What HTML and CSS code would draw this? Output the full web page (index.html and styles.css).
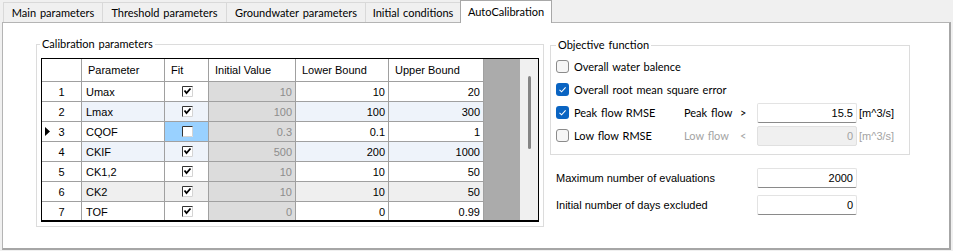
FILE: index.html
```html
<!DOCTYPE html>
<html>
<head>
<meta charset="utf-8">
<link rel="stylesheet" href="styles.css">
</head>
<body>
<div class="tabs">
  <div class="tab t1">Main parameters</div>
  <div class="tab t2">Threshold parameters</div>
  <div class="tab t3">Groundwater parameters</div>
  <div class="tab t4">Initial conditions</div>
  <div class="tab active t5">AutoCalibration</div>
</div>
<div class="panel">
  <fieldset class="group calib">
    <legend>Calibration parameters</legend>
    <div class="grid">
      <div class="table">
        <div class="c hd"></div>
        <div class="c hd">Parameter</div>
        <div class="c hd">Fit</div>
        <div class="c hd">Initial Value</div>
        <div class="c hd">Lower Bound</div>
        <div class="c hd">Upper Bound</div>

        <div class="c rh">1</div>
        <div class="c txt">Umax</div>
        <div class="c fit"><svg class="cb" width="11" height="11" viewBox="0 0 11 11"><rect x="0" y="0" width="11" height="11" fill="#fff"/><path d="M0.5 11V0.5H11" stroke="#333" fill="none"/><path d="M10.5 0.5V10.5H0.5" stroke="#d4d4d4" fill="none"/><path d="M2.5 4.5L4.5 7L8.5 2.5" stroke="#000" stroke-width="1.8" fill="none"/></svg></div>
        <div class="c num ro">10</div>
        <div class="c num">10</div>
        <div class="c num">20</div>

        <div class="c rh">2</div>
        <div class="c txt alt">Lmax</div>
        <div class="c fit alt"><svg class="cb" width="11" height="11" viewBox="0 0 11 11"><rect x="0" y="0" width="11" height="11" fill="#fff"/><path d="M0.5 11V0.5H11" stroke="#333" fill="none"/><path d="M10.5 0.5V10.5H0.5" stroke="#d4d4d4" fill="none"/><path d="M2.5 4.5L4.5 7L8.5 2.5" stroke="#000" stroke-width="1.8" fill="none"/></svg></div>
        <div class="c num ro">100</div>
        <div class="c num alt">100</div>
        <div class="c num alt">300</div>

        <div class="c rh cur"><svg class="ind" width="5" height="9" viewBox="0 0 5 9"><path d="M0 0L5 4.5L0 9Z" fill="#000"/></svg>3</div>
        <div class="c txt">CQOF</div>
        <div class="c fit sel"><svg class="cb" width="11" height="11" viewBox="0 0 11 11"><rect x="0" y="0" width="11" height="11" fill="#fff"/><path d="M0.5 11V0.5H11" stroke="#333" fill="none"/><path d="M10.5 0.5V10.5H0.5" stroke="#d4d4d4" fill="none"/></svg></div>
        <div class="c num ro">0.3</div>
        <div class="c num">0.1</div>
        <div class="c num">1</div>

        <div class="c rh">4</div>
        <div class="c txt alt">CKIF</div>
        <div class="c fit alt"><svg class="cb" width="11" height="11" viewBox="0 0 11 11"><rect x="0" y="0" width="11" height="11" fill="#fff"/><path d="M0.5 11V0.5H11" stroke="#333" fill="none"/><path d="M10.5 0.5V10.5H0.5" stroke="#d4d4d4" fill="none"/><path d="M2.5 4.5L4.5 7L8.5 2.5" stroke="#000" stroke-width="1.8" fill="none"/></svg></div>
        <div class="c num ro">500</div>
        <div class="c num alt">200</div>
        <div class="c num alt">1000</div>

        <div class="c rh">5</div>
        <div class="c txt">CK1,2</div>
        <div class="c fit"><svg class="cb" width="11" height="11" viewBox="0 0 11 11"><rect x="0" y="0" width="11" height="11" fill="#fff"/><path d="M0.5 11V0.5H11" stroke="#333" fill="none"/><path d="M10.5 0.5V10.5H0.5" stroke="#d4d4d4" fill="none"/><path d="M2.5 4.5L4.5 7L8.5 2.5" stroke="#000" stroke-width="1.8" fill="none"/></svg></div>
        <div class="c num ro">10</div>
        <div class="c num">10</div>
        <div class="c num">50</div>

        <div class="c rh">6</div>
        <div class="c txt gr">CK2</div>
        <div class="c fit gr"><svg class="cb" width="11" height="11" viewBox="0 0 11 11"><rect x="0" y="0" width="11" height="11" fill="#fff"/><path d="M0.5 11V0.5H11" stroke="#333" fill="none"/><path d="M10.5 0.5V10.5H0.5" stroke="#d4d4d4" fill="none"/><path d="M2.5 4.5L4.5 7L8.5 2.5" stroke="#000" stroke-width="1.8" fill="none"/></svg></div>
        <div class="c num ro">10</div>
        <div class="c num gr">10</div>
        <div class="c num gr">50</div>

        <div class="c rh">7</div>
        <div class="c txt">TOF</div>
        <div class="c fit"><svg class="cb" width="11" height="11" viewBox="0 0 11 11"><rect x="0" y="0" width="11" height="11" fill="#fff"/><path d="M0.5 11V0.5H11" stroke="#333" fill="none"/><path d="M10.5 0.5V10.5H0.5" stroke="#d4d4d4" fill="none"/><path d="M2.5 4.5L4.5 7L8.5 2.5" stroke="#000" stroke-width="1.8" fill="none"/></svg></div>
        <div class="c num ro">0</div>
        <div class="c num">0</div>
        <div class="c num">0.99</div>
      </div>
      <div class="filler"></div>
      <div class="vscroll"><div class="thumb"></div></div>
    </div>
  </fieldset>

  <div class="right">
    <fieldset class="group objective">
      <legend>Objective function</legend>
      <div class="obj-grid">
        <label class="chk span"><span class="box"></span>Overall water balence</label>
        <label class="chk span"><span class="box on"><svg width="13" height="13" viewBox="0 0 13 13"><path d="M3.5 6.8L5.6 8.8L9.6 4.4" stroke="#fff" stroke-width="1.1" fill="none"/></svg></span>Overall root mean square error</label>

        <label class="chk"><span class="box on"><svg width="13" height="13" viewBox="0 0 13 13"><path d="M3.5 6.8L5.6 8.8L9.6 4.4" stroke="#fff" stroke-width="1.1" fill="none"/></svg></span>Peak flow RMSE</label>
        <span class="ui">Peak flow</span>
        <span class="ui">&gt;</span>
        <div class="field">15.5</div>
        <span class="unit">[m^3/s]</span>

        <label class="chk"><span class="box"></span>Low flow RMSE</label>
        <span class="ui dis">Low flow</span>
        <span class="ui dis">&lt;</span>
        <div class="field disabled">0</div>
        <span class="unit dis">[m^3/s]</span>
      </div>
    </fieldset>
    <div class="settings">
      <span>Maximum number of evaluations</span>
      <div class="field">2000</div>
      <span>Initial number of days excluded</span>
      <div class="field">0</div>
    </div>
  </div>
</div>
</body>
</html>
```
FILE: styles.css
```css
html, body {
  margin: 0;
  padding: 0;
}
body {
  background: #f0f0f0;
  width: 953px;
  height: 251px;
  overflow: hidden;
  font-family: "Liberation Sans", Arial, sans-serif;
  font-size: 11px;
  color: #000;
}

/* tabs */
.tabs {
  display: flex;
  align-items: flex-start;
  height: 22px;
  padding-left: 3px;
}
.tab {
  box-sizing: border-box;
  height: 20px;
  margin-top: 2px;
  margin-right: -1px;
  border: 1px solid #d9d9d9;
  border-bottom: none;
  background: #f0f0f0;
  text-align: center;
  line-height: 19px;
  font-family: Lato, "Noto Sans", sans-serif;
  font-size: 11px;
  word-spacing: 1px;
  white-space: nowrap;
}
.t1 { width: 100px; }
.t2 { width: 125px; }
.t3 { width: 140px; }
.t4 { width: 96px; }
.t5 { width: 92px; }
.tab.active {
  position: relative;
  z-index: 1;
  height: 23px;
  margin-top: 0;
  background: #fff;
  border-color: #a8a8a8;
  line-height: 21px;
}

/* panel */
.panel {
  box-sizing: border-box;
  margin-left: 2px;
  width: 949px;
  height: 228px;
  background: #fff;
  border: 1px solid #b4b4b4;
  border-right: 2px solid #a6a6a6;
  border-bottom: 2px solid #a6a6a6;
  display: flex;
  align-items: flex-start;
}

.group {
  margin: 0;
  padding: 0;
  border: 1px solid #dcdcdc;
  min-width: 0;
  box-sizing: border-box;
}
.group legend {
  padding: 0 2px;
  font-family: Lato, "Noto Sans", sans-serif;
  font-size: 11px;
  word-spacing: 1px;
  line-height: 16px;
}
.calib {
  margin: 13px 0 0 33px;
  width: 508px;
  height: 191px;
}
.calib legend { margin-left: 3px; }

/* data grid */
.grid {
  box-sizing: border-box;
  margin: 6px 0 0 4px;
  width: 498px;
  height: 164px;
  border: 1px solid #000;
  border-bottom-width: 2px;
  display: flex;
  overflow: hidden;
}
.table {
  display: grid;
  grid-template-columns: 40px 83px 44px 87px 93px 95px;
  grid-template-rows: 23px repeat(7, 20px);
  flex: none;
}
.c {
  box-sizing: border-box;
  border-right: 1px solid #a0a0a0;
  border-bottom: 1px solid #a0a0a0;
  display: flex;
  align-items: center;
  background: #fff;
  white-space: nowrap;
  overflow: hidden;
}
.hd { padding-left: 6px; }
.rh { justify-content: center; position: relative; }
.cur .ind {
  position: absolute;
  left: 3px;
  top: 5px;
}
.txt { padding-left: 4px; }
.num { justify-content: flex-end; padding-right: 3px; }
.fit { justify-content: center; padding-left: 1px; }
.ro { background: #dcdcdc; color: #8d8d8d; }
.alt { background: #eef3fa; }
.gr { background: #efefef; }
.sel { background: #99d1ff; }
.cb { display: block; }

.filler {
  width: 36px;
  flex: none;
  background: #ababab;
}
.vscroll {
  width: 18px;
  flex: none;
  background: #f0f0f0;
  display: flex;
  justify-content: center;
  padding-top: 17px;
  box-sizing: border-box;
}
.thumb {
  width: 3px;
  height: 73px;
  border-radius: 2px;
  background: #858585;
}

/* right side */
.right {
  margin: 14px 0 0 6px;
  display: flex;
  flex-direction: column;
}
.objective {
  width: 360px;
  height: 118px;
  padding: 2px 0 0 5px;
}
.objective legend { margin-left: 0; }
.obj-grid {
  display: grid;
  grid-template-columns: 128px 56px 17px 100px auto;
  grid-auto-rows: 23px;
  align-items: center;
}
.span { grid-column: 1 / -1; }
.chk, .ui {
  font-family: Lato, "Noto Sans", sans-serif;
  font-size: 11px;
  word-spacing: 1px;
  white-space: nowrap;
}
.chk {
  display: flex;
  align-items: center;
  gap: 5px;
}
.box {
  box-sizing: border-box;
  width: 13px;
  height: 13px;
  border: 1px solid #8b8b8b;
  border-radius: 3px;
  background: #f6f6f6;
  flex: none;
  display: flex;
  align-items: center;
  justify-content: center;
}
.box.on {
  border: none;
  background: #0a64c2;
}
.box svg { display: block; }
.dis { color: #a3a3a3; }

.field {
  box-sizing: border-box;
  width: 100px;
  height: 20px;
  border: 1px solid #e3e3e3;
  border-bottom-color: #8a8a8a;
  border-radius: 2px;
  background: #fff;
  text-align: right;
  padding-right: 3px;
  line-height: 18px;
}
.field.disabled {
  background: #f0f0f0;
  border-color: #e0e0e0;
  color: #a3a3a3;
}
.unit { padding-left: 2px; white-space: nowrap; }

.settings {
  margin-top: 13px;
  padding-left: 6px;
  display: grid;
  grid-template-columns: 201px 100px;
  row-gap: 7px;
  align-items: center;
}
```
